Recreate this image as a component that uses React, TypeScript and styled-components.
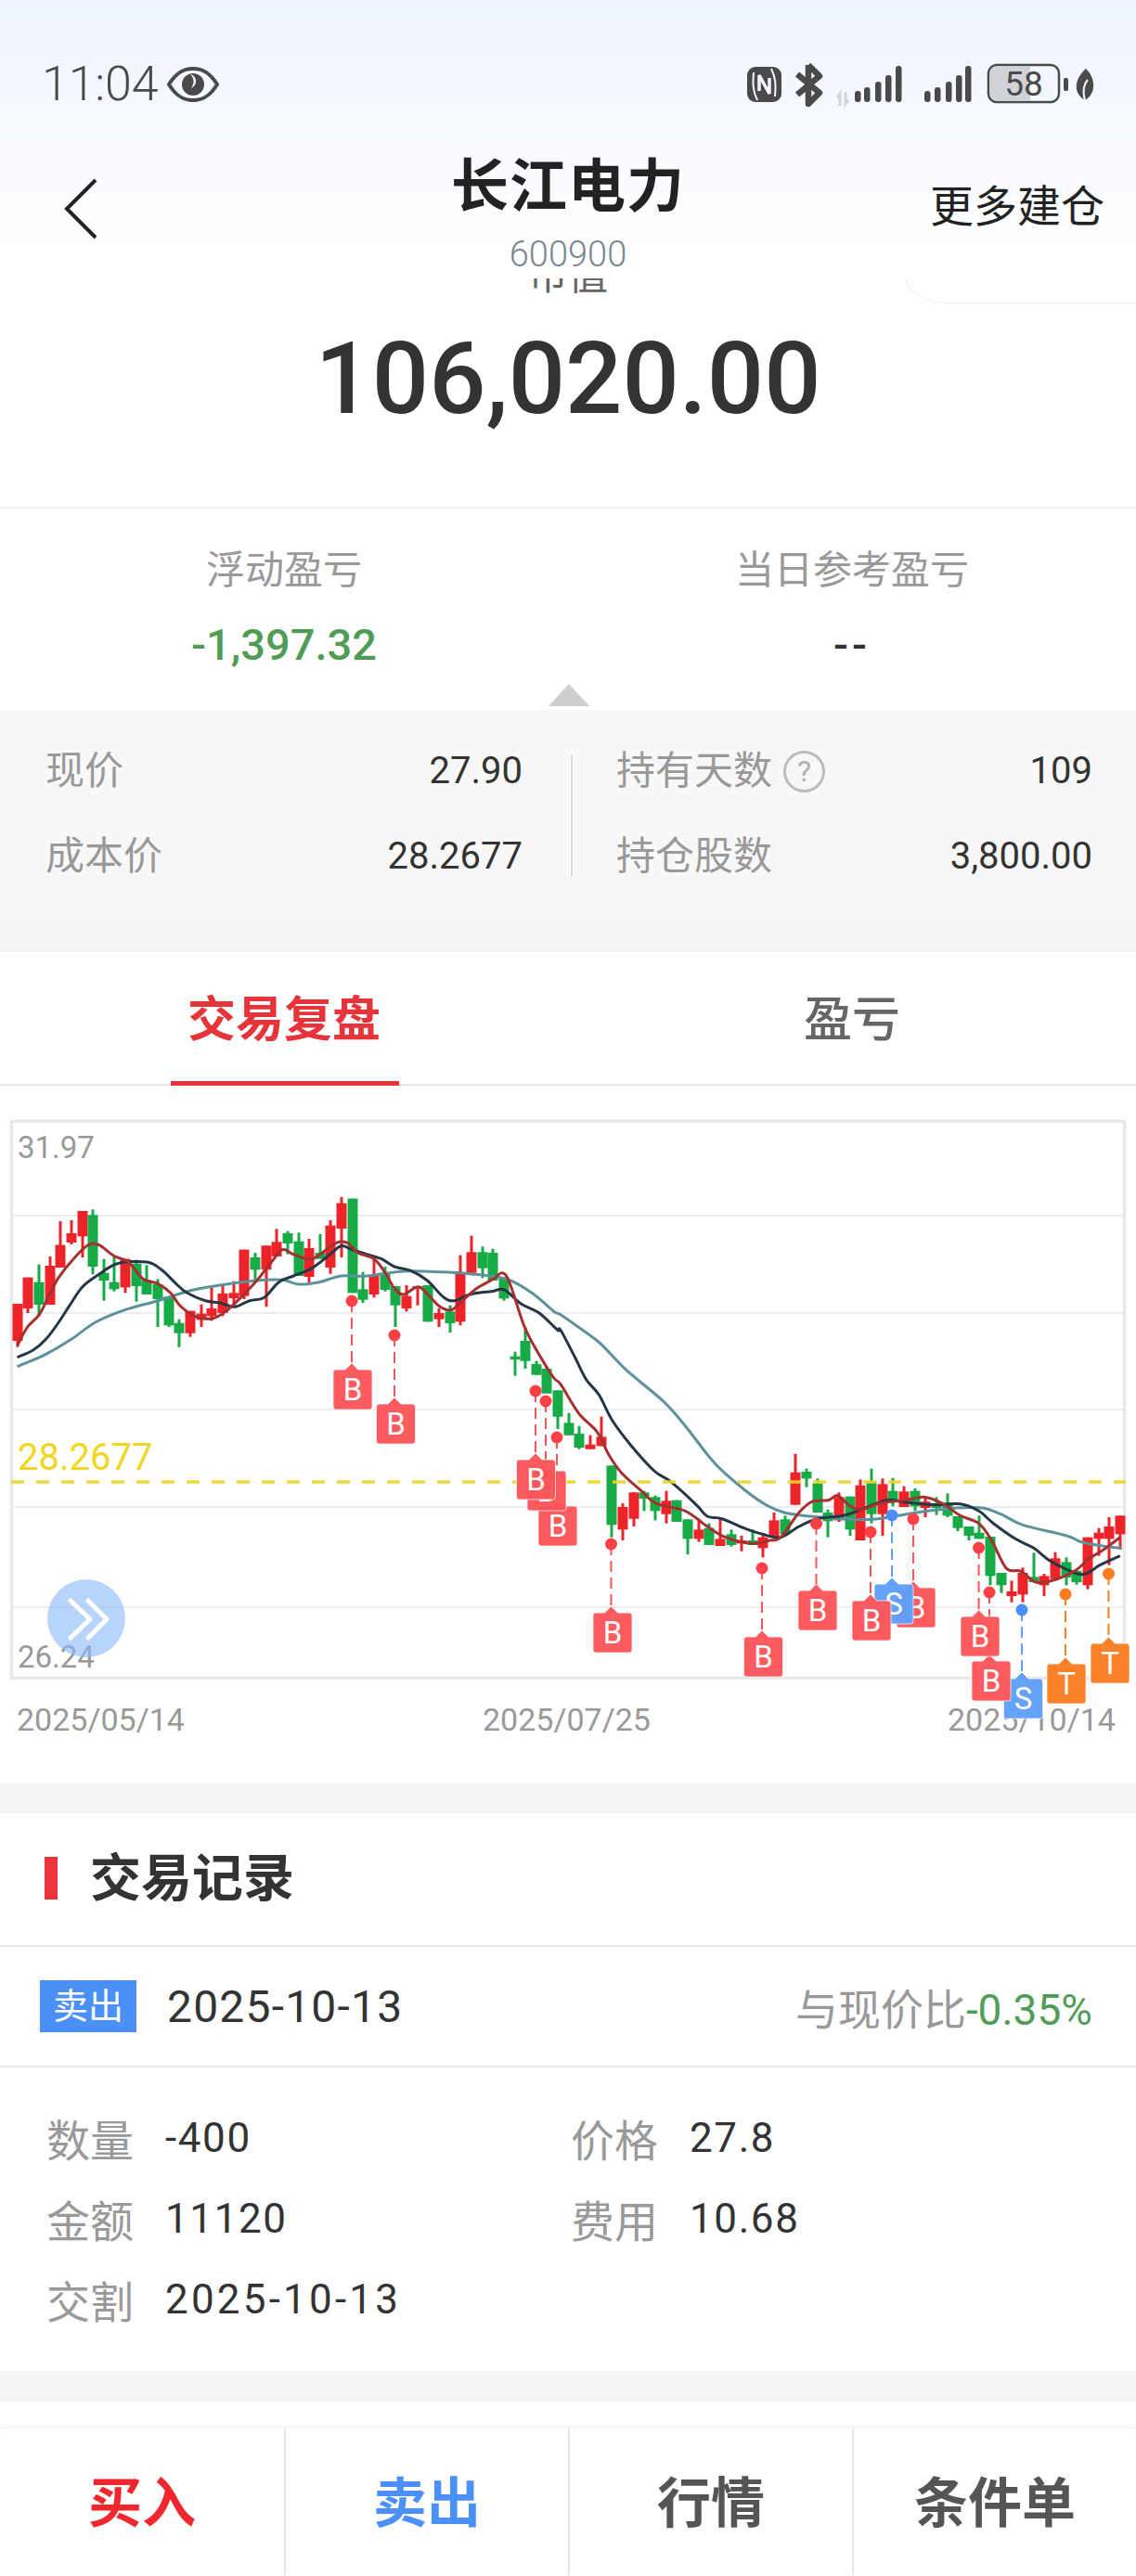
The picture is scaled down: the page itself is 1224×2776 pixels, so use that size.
import React from "react";
import styled, { createGlobalStyle } from "styled-components";

const Global = createGlobalStyle`
  html, body { margin: 0; padding: 0; background: #fff; }
  body { font-family: Roboto, "Noto Sans CJK SC", sans-serif; }
  * { box-sizing: border-box; }
`;

const Page = styled.div`
  position: relative; width: 1224px; height: 2776px; overflow: hidden;
  display: flex; flex-direction: column; background: #fff;
`;
const Header = styled.header`
  height: 300px; flex: none;
  background: linear-gradient(180deg, #eef4fd 0%, #f5f8fe 35%, #ffffff 92%);
`;
const StatusBar = styled.div`
  display: flex; justify-content: space-between; align-items: center;
  height: 50px; margin-top: 66px; padding: 0 44px 0 45px; color: #4a4a4a;
`;
const TimeBox = styled.div`display: flex; align-items: center; gap: 10px;`;
const Time = styled.span`font-size: 52px; line-height: 50px; letter-spacing: -0.2px; font-weight: 300;`;
const Nav = styled.nav`
  display: grid; grid-template-columns: 1fr auto 1fr; padding-top: 55px;
`;
const Back = styled.div`padding: 21px 0 0 68px;`;
const TitleBox = styled.div`display: flex; flex-direction: column; align-items: center;`;
const Title = styled.h1`
  margin: 0; font-size: 62px; line-height: 62px; font-weight: 700; color: #222; letter-spacing: 1px;
`;
const Code = styled.div`font-size: 38px; line-height: 40px; margin-top: 21px; color: #7b8691; font-weight: 300;`;
const More = styled.div`
  justify-self: end; padding: 27px 34px 0 0; font-size: 47px; line-height: 50px; color: #222;
`;
const MoreCorner = styled.div`
  position: absolute; top: 300px; right: 0; width: 248px; height: 27px; background: #fff;
  border-left: 1px solid #ececec; border-bottom: 1px solid #ececec;
  border-bottom-left-radius: 47px 27px;
`;
const ValueSection = styled.section`
  height: 248px; flex: none; overflow: hidden; border-bottom: 2px solid #eeeeee;
  display: flex; flex-direction: column; align-items: center;
`;
const ValueLabel = styled.div`font-size: 43px; line-height: 44px; margin-top: -25px; color: #666;`;
const ValueNumber = styled.div`
  font-size: 108px; line-height: 120px; margin-top: 29px; color: #333; font-weight: 500;
`;
const Pnl = styled.section`
  position: relative; height: 217px; flex: none; display: grid; grid-template-columns: 1fr 1fr;
`;
const PnlCell = styled.div`display: flex; flex-direction: column; align-items: center; padding-top: 42px;`;
const PnlLabel = styled.div`font-size: 42px; line-height: 50px; color: #999;`;
const PnlValue = styled.div<{ $c: string; $ls?: number }>`
  font-size: 47px; line-height: 56px; margin-top: 27px; font-weight: 500; color: ${p => p.$c};
  letter-spacing: ${p => p.$ls ?? 0}px;
`;
const Arrow = styled.div`
  position: absolute; left: 591px; bottom: 4px; width: 0; height: 0;
  border-left: 22px solid transparent; border-right: 22px solid transparent; border-bottom: 24px solid #cfcfcf;
`;
const Panel = styled.section`
  height: 228px; flex: none; background: #f8f8f8; display: flex; padding: 43px 47px 0 49px;
`;
const PanelCol = styled.div<{ $w: number }>`
  width: ${p => p.$w}px; display: flex; flex-direction: column; gap: 46px;
`;
const PanelRow = styled.div`display: flex; justify-content: space-between; align-items: center; height: 46px;`;
const PanelKey = styled.span`
  font-size: 42px; line-height: 46px; color: #999; display: flex; align-items: center; gap: 12px;
`;
const PanelVal = styled.span`font-size: 40px; line-height: 46px; color: #333;`;
const Help = styled.span`
  width: 45px; height: 45px; border-radius: 50%; border: 3px solid #bdbdbd; color: #b0b0b0;
  font-size: 32px; line-height: 39px; text-align: center; display: inline-block;
`;
const PanelDivider = styled.div`
  width: 2px; height: 130px; margin: 6px 47px 0 52px; background: #dddddd;
`;
const Gap = styled.div<{ $h: number }>`height: ${p => p.$h}px; flex: none; background: #f4f4f4;`;
const Tabs = styled.div`display: flex; height: 144px; flex: none; border-bottom: 2px solid #e8e8ea;`;
const Tab = styled.div<{ $active?: boolean }>`
  position: relative; flex: 1; display: flex; align-items: center; justify-content: center; padding-bottom: 6px;
  font-size: 52px; font-weight: ${p => (p.$active ? 700 : 500)}; color: ${p => (p.$active ? "#e6343a" : "#666")};
  &::after {
    content: ""; display: ${p => (p.$active ? "block" : "none")};
    position: absolute; left: 184px; width: 246px; height: 5px; bottom: -2px; background: #e6343a;
  }
`;
const ChartSvg = styled.svg`display: block; flex: none; position: relative; z-index: 1; overflow: visible;`;
const AxisText = styled.text`font-family: Roboto, sans-serif; font-size: 33px; fill: #999;`;
const DateText = styled.text`font-family: Roboto, sans-serif; font-size: 34px; fill: #999;`;
const CostText = styled.text`font-family: Roboto, sans-serif; font-size: 40px; fill: #f0d722;`;
const MarkText = styled.text`font-family: Roboto, sans-serif; font-size: 33px; fill: #fff; text-anchor: middle;`;
const SectionHead = styled.div`
  height: 144px; flex: none; display: flex; align-items: center; gap: 35px; padding: 0 0 3px 48px;
  border-bottom: 2px solid #eaeaea;
`;
const HeadBar = styled.i`display: block; width: 14px; height: 46px; background: #ee343b;`;
const HeadText = styled.h2`margin: 0; font-size: 55px; line-height: 60px; color: #333; font-weight: 700;`;
const Record = styled.div`
  height: 130px; flex: none; display: flex; align-items: center; padding: 0 47px 0 43px;
  border-bottom: 2px solid #eaeaea;
`;
const Badge = styled.span`
  width: 104px; height: 56px; background: #4a90f7; color: #fff; font-size: 38px; line-height: 56px; text-align: center;
`;
const RecDate = styled.span`font-size: 48px; margin-left: 33px; color: #333; letter-spacing: 1.2px;`;
const Compare = styled.span`margin-left: auto; font-size: 46px; color: #999;`;
const CompareVal = styled.span`font-size: 46px; color: #4f9d55;`;
const Details = styled.div`
  height: 327px; flex: none; padding: 32px 0 0 50px;
  display: grid; grid-template-columns: 565px 1fr; grid-auto-rows: 87px;
`;
const Detail = styled.div`display: flex; align-items: center; gap: 34px;`;
const DetailKey = styled.span`font-size: 47px; color: #999;`;
const DetailVal = styled.span<{ $ls?: number }>`
  font-size: 44px; color: #333; letter-spacing: ${p => p.$ls ?? 1.6}px;
`;
const Spacer = styled.div`height: 29px; flex: none;`;
const BottomBar = styled.div`
  height: 158px; flex: none; display: grid; grid-template-columns: repeat(4, 1fr); background: #fff;
  box-shadow: 0 -2px 5px rgba(0, 0, 0, 0.06); position: relative; z-index: 2;
`;
const BarBtn = styled.div<{ $c: string }>`
  display: flex; align-items: center; justify-content: center; padding-bottom: 6px;
  font-size: 58px; font-weight: 700; color: ${p => p.$c};
  & + & { border-left: 2px solid #e5e5e5; }
`;

const X2 = (X: number) => X / 2.53;
const X3 = (X: number) => 604 + X / 2.53;
const Y = (v: number) => 1180 + v / 3;

type C = [number, number, number, number, "r" | "g"];
const candles: C[] = [
  [675,675,795,815,"r"],[590,590,690,705,"r"],[548,605,678,715,"g"],[522,552,678,678,"r"],[408,485,558,558,"r"],
  [405,447,477,483,"r"],[375,375,457,525,"r"],[370,388,555,580,"g"],[530,575,600,665,"g"],[520,605,628,635,"g"],
  [530,530,622,640,"r"],[533,545,618,668,"g"],[550,598,645,645,"g"],[595,612,660,750,"g"],[652,652,745,750,"g"],
  [725,737,770,815,"g"],[698,698,770,782,"r"],[677,707,727,750,"r"],[615,690,715,730,"r"],[615,642,705,715,"r"],
  [602,640,657,680,"r"],[500,500,650,660,"r"],[510,525,565,600,"g"],[487,487,565,685,"r"],[433,475,522,522,"r"],
  [440,447,480,515,"g"],[445,473,585,585,"g"],[465,495,588,615,"r"],[450,510,530,530,"g"],[405,422,558,578,"r"],
  [330,350,432,525,"r"],[335,335,640,640,"g"],[572,628,662,672,"g"],[530,585,645,655,"r"],[555,575,630,635,"g"],
  [618,618,680,750,"g"],[615,650,690,700,"r"],[618,618,626,680,"r"],[615,615,733,733,"g"],[690,705,725,750,"r"],
  [680,700,738,768,"g"],[518,575,733,745,"r"],[455,508,575,575,"r"],[490,508,560,592,"g"],[497,510,600,600,"g"],
  [590,590,658,665,"g"],[830,845,855,908,"g"],[750,795,860,885,"g"],[860,870,905,905,"g"],[880,885,965,965,"g"],
  [955,955,1040,1080,"g"],[1028,1060,1100,1100,"g"],[1070,1095,1140,1145,"g"],[1100,1130,1145,1145,"r"],[1040,1105,1135,1135,"r"],
  [1198,1198,1390,1430,"g"],[1320,1332,1405,1440,"r"],[1285,1285,1370,1395,"r"],[1280,1285,1305,1345,"g"],[1295,1300,1345,1375,"g"],
  [1280,1312,1355,1385,"r"],[1310,1310,1380,1380,"g"],[1372,1372,1435,1485,"g"],[1370,1405,1435,1445,"r"],[1385,1400,1455,1455,"g"],
  [1370,1435,1458,1458,"r"],[1405,1420,1455,1460,"g"],[1425,1440,1450,1475,"r"],[1405,1440,1455,1455,"g"],[1425,1430,1465,1495,"r"],
  [1350,1375,1430,1430,"r"],[1360,1372,1420,1420,"g"],[1160,1220,1325,1325,"r"],[1208,1218,1240,1268,"g"],[1240,1255,1350,1350,"g"],
  [1340,1350,1378,1430,"g"],[1285,1300,1375,1380,"r"],[1298,1298,1405,1425,"g"],[1243,1262,1440,1440,"r"],[1208,1250,1355,1385,"g"],
  [1240,1258,1355,1425,"r"],[1238,1280,1315,1330,"g"],[1265,1282,1332,1332,"r"],[1272,1280,1330,1345,"g"],[1300,1315,1335,1365,"r"],
  [1300,1320,1335,1358,"g"],[1288,1318,1360,1365,"g"],[1362,1362,1400,1410,"g"],[1395,1395,1425,1440,"g"],[1360,1415,1435,1435,"g"],
  [1428,1428,1555,1585,"g"],[1545,1545,1585,1610,"g"],[1570,1605,1620,1640,"r"],[1528,1545,1615,1640,"r"],[1480,1558,1575,1575,"g"],
  [1548,1555,1585,1620,"r"],[1478,1498,1565,1570,"r"],[1495,1510,1560,1585,"g"],[1538,1538,1575,1583,"g"],[1430,1430,1585,1598,"r"],
  [1400,1415,1435,1490,"r"],[1365,1395,1435,1520,"r"],[1360,1360,1420,1470,"r"],
];

type P = [number, number];
const toPts = (a: number[][], fx: (n: number) => number): P[] => a.map(([x, y]) => [fx(x), Y(y)]);

const smooth = (pts: P[]) => {
  let d = `M${pts[0][0].toFixed(1)} ${pts[0][1].toFixed(1)}`;
  for (let i = 0; i < pts.length - 1; i++) {
    const p0 = pts[Math.max(i - 1, 0)], p1 = pts[i], p2 = pts[i + 1], p3 = pts[Math.min(i + 2, pts.length - 1)];
    const c1x = p1[0] + (p2[0] - p0[0]) / 6, c1y = p1[1] + (p2[1] - p0[1]) / 6;
    const c2x = p2[0] - (p3[0] - p1[0]) / 6, c2y = p2[1] - (p3[1] - p1[1]) / 6;
    d += `C${c1x.toFixed(1)} ${c1y.toFixed(1)} ${c2x.toFixed(1)} ${c2y.toFixed(1)} ${p2[0].toFixed(1)} ${p2[1].toFixed(1)}`;
  }
  return d;
};

const ma5 = [
  ...toPts([[47,810],[75,750],[107,710],[133,650],[160,590],[200,530],[240,485],[270,485],[310,520],[350,540],[390,595],[430,610],[465,640],[490,680],[530,715],[580,722],[620,695],[660,650],[700,600],[740,540],[770,500],[800,515],[850,530],[900,490],[925,475],[950,480],[975,510],[1020,530],[1050,575],[1075,625],[1100,645],[1140,620],[1170,650],[1200,685],[1230,695],[1260,665],[1300,625],[1345,595],[1370,575],[1390,610],[1430,750],[1470,840],[1510,915]], X2),
  ...toPts([[0,935],[50,1030],[100,1090],[130,1160],[165,1220],[220,1280],[260,1320],[340,1345],[400,1395],[450,1430],[520,1450],[570,1440],[600,1430],[650,1350],[685,1315],[730,1310],[755,1295],[790,1330],[820,1340],[870,1320],[940,1310],[990,1300],[1040,1320],[1090,1360],[1140,1385],[1175,1440],[1215,1530],[1255,1540],[1295,1575],[1340,1570],[1400,1540],[1440,1500],[1480,1470],[1525,1430]], X3),
];
const ma10 = [
  ...toPts([[47,848],[90,825],[125,790],[160,735],[190,680],[225,620],[270,580],[320,545],[400,540],[440,565],[480,610],[510,640],[560,665],[600,672],[640,685],[680,665],[720,655],[760,605],[800,585],[850,560],[900,515],[930,488],[960,500],[1000,515],[1040,530],[1075,555],[1120,568],[1165,600],[1210,655],[1240,665],[1280,645],[1340,635],[1375,630],[1420,675],[1470,705],[1520,760]], X2),
  ...toPts([[0,760],[40,850],[70,920],[105,970],[140,1050],[190,1130],[255,1215],[300,1250],[370,1325],[400,1362],[440,1370],[500,1400],[550,1420],[600,1430],[650,1395],[700,1370],[770,1360],[830,1335],[890,1310],[950,1318],[1020,1325],[1090,1322],[1140,1345],[1180,1385],[1240,1435],[1290,1465],[1340,1510],[1420,1550],[1470,1520],[1525,1490]], X3),
];
const ma20 = [
  ...toPts([[47,878],[125,838],[200,785],[260,735],[340,695],[430,665],[520,632],[600,615],[700,600],[770,598],[815,612],[870,605],[930,585],[1000,585],[1100,570],[1200,572],[1280,578],[1380,595],[1450,640],[1510,700]], X2),
  ...toPts([[0,710],[60,760],[110,805],[180,890],[280,990],[340,1070],[420,1190],[500,1275],[560,1325],[610,1350],[680,1362],[770,1370],[850,1372],[930,1358],[1000,1345],[1080,1335],[1150,1335],[1200,1355],[1260,1390],[1380,1425],[1420,1445],[1490,1460],[1530,1465]], X3),
];

const RED = "#fc5558", BLUE = "#5f9ffb", ORANGE = "#fb7d1f";
type M = { x: number; y: number; bx: number; by: number; t: string; c: string; dot?: string };
const markers: M[] = [
  { x: 379, y: 1402, bx: 359, by: 1476, t: "B", c: RED, dot: "#fb4146" },
  { x: 425, y: 1439, bx: 405.5, by: 1513, t: "B", c: RED, dot: "#fb4146" },
  { x: 600, y: 1549, bx: 580, by: 1623, t: "B", c: RED, dot: "#fb4146" },
  { x: 588, y: 1510, bx: 568, by: 1585, t: "B", c: RED, dot: "#fb4146" },
  { x: 577, y: 1499, bx: 556.5, by: 1573, t: "B", c: RED, dot: "#fb4146" },
  { x: 658.5, y: 1664, bx: 639, by: 1738, t: "B", c: RED, dot: "#fb4146" },
  { x: 821, y: 1690, bx: 801.5, by: 1764, t: "B", c: RED, dot: "#fb4146" },
  { x: 879.5, y: 1642, bx: 860, by: 1714, t: "B", c: RED, dot: "#fb4146" },
  { x: 984, y: 1637, bx: 966, by: 1711, t: "B", c: RED, dot: "#fb4146" },
  { x: 961, y: 1633, bx: 942, by: 1707, t: "S", c: BLUE, dot: "#4a8ffb" },
  { x: 938, y: 1651, bx: 918, by: 1725, t: "B", c: RED, dot: "#fb4146" },
  { x: 1101, y: 1735, bx: 1081.5, by: 1809, t: "S", c: BLUE, dot: "#4a8ffb" },
  { x: 1066, y: 1716, bx: 1047, by: 1790, t: "B", c: RED, dot: "#fb4146" },
  { x: 1054.6, y: 1668, bx: 1035, by: 1742, t: "B", c: RED, dot: "#fb4146" },
  { x: 1148, y: 1718, bx: 1128, by: 1793, t: "T", c: ORANGE, dot: "#fb7d1f" },
  { x: 1194.5, y: 1696, bx: 1175, by: 1771, t: "T", c: ORANGE, dot: "#fb7d1f" },
];

const Marker = ({ x, y, bx, by, t, c, dot }: M) => (
  <g>
    <line x1={x} y1={y} x2={x} y2={by} stroke={c} strokeWidth={2} strokeDasharray="12 6" />
    <circle cx={x} cy={y} r={6.5} fill={dot} />
    <path
      d={`M${bx + 3} ${by} H${x - 7} L${x} ${by - 7} L${x + 7} ${by} H${bx + 39} Q${bx + 42} ${by} ${bx + 42} ${by + 3} V${by + 40} Q${bx + 42} ${by + 43} ${bx + 39} ${by + 43} H${bx + 3} Q${bx} ${by + 43} ${bx} ${by + 40} V${by + 3} Q${bx} ${by} ${bx + 3} ${by}Z`}
      fill={c} fillOpacity={0.96} stroke="#fff" strokeOpacity={0.7} strokeWidth={1}
    />
    <MarkText x={bx + 21} y={by + 33}>{t}</MarkText>
  </g>
);

const Chart = () => (
  <ChartSvg width={1224} height={752} viewBox="0 1170 1224 752">
    <rect x={12.5} y={1208.5} width={1199} height={600} fill="#fff" stroke="#e8e8ec" strokeWidth={3.5} />
    {[1310, 1415, 1519, 1624, 1732].map(g => (
      <line key={g} x1={14} x2={1210} y1={g} y2={g} stroke="#ebebf1" strokeWidth={2} />
    ))}
    {candles.map(([wt, bt, bb, wb, c], i) => {
      const x = Math.round(18.6 + 11.65 * i);
      const col = c === "r" ? "#ec2328" : "#16ab47";
      return (
        <g key={i} fill={col}>
          <rect x={x - 1.5} y={Y(wt)} width={3} height={(wb - wt) / 3} />
          <rect x={x - 5.5} y={Y(bt)} width={11} height={Math.max((bb - bt) / 3, 2)} />
        </g>
      );
    })}
    <path d={smooth(ma20)} fill="none" stroke="#5d929c" strokeWidth={3} strokeLinejoin="round" />
    <path d={smooth(ma10)} fill="none" stroke="#253746" strokeWidth={3} strokeLinejoin="round" />
    <path d={smooth(ma5)} fill="none" stroke="#a5302f" strokeWidth={3} strokeLinejoin="round" />
    <line x1={12} x2={1213} y1={1597} y2={1597} stroke="#edd62a" strokeOpacity={0.92} strokeWidth={3.5} strokeDasharray="14 13" />
    <AxisText x={19} y={1248}>31.97</AxisText>
    <CostText x={19} y={1584}>28.2677</CostText>
    <AxisText x={19} y={1797}>26.24</AxisText>
    <DateText x={18} y={1865}>2025/05/14</DateText>
    <DateText x={520} y={1865}>2025/07/25</DateText>
    <DateText x={1021} y={1865}>2025/10/14</DateText>
    <circle cx={93} cy={1744} r={42} fill="#8ab8f8" fillOpacity={0.6} />
    <path d="M76 1725 L97 1745 L76 1765 M95 1725 L115 1745 L95 1765" fill="none" stroke="#fff" strokeWidth={5} strokeLinecap="round" strokeLinejoin="round" />
    {markers.map((m, i) => <Marker key={i} {...m} />)}
  </ChartSvg>
);

const EyeIcon = () => (
  <svg width="56" height="38" viewBox="0 0 56 38">
    <path d="M2 19 C10 6 18 2 28 2 C38 2 46 6 54 19 C46 32 38 36 28 36 C18 36 10 32 2 19Z" fill="none" stroke="#4a4a4a" strokeWidth={4} />
    <circle cx="28" cy="19" r="12" fill="#4a4a4a" />
    <path d="M25 8 C33 10 33 20 26 23 C30 17 29 12 25 8Z" fill="#f2f6fe" />
  </svg>
);

const BatteryText = styled.text`font-family: Roboto, sans-serif; font-size: 37px; fill: #4a4a4a; text-anchor: middle;`;

const StatusIcons = () => {
  const hs = [12, 16, 22, 29, 39];
  return (
    <svg width="380" height="50" viewBox="800 66 380 50">
      <rect x={805} y={72} width={37} height={38} rx={9} fill="#4a4a4a" />
      <path d="M812 78 C811 90 811 98 816 108" stroke="#f2f6fe" strokeWidth={2} fill="none" />
      <path d="M835 104 C836 92 836 84 831 74" stroke="#f2f6fe" strokeWidth={2} fill="none" />
      <path d="M818 98 V81 L829 101 V84" stroke="#f2f6fe" strokeWidth={3.5} fill="none" />
      <path d="M871 70 L871 112 L883 100 L859 80 M871 70 L883 82 L859 102" fill="none" stroke="#4a4a4a" strokeWidth={6.5} strokeLinejoin="round" />
      <path d="M905 114 V101 L902 105 M911 99 V112 L914 108" fill="none" stroke="#d2d4d8" strokeWidth={3} />
      {[924, 934, 946, 957, 968].map((x, i) => (
        <rect key={x} x={x - 3} y={110 - hs[i]} width={6.5} height={hs[i]} rx={3} fill="#4a4a4a" />
      ))}
      {[999, 1010, 1022, 1033, 1043].map((x, i) => (
        <rect key={x} x={x - 3} y={110 - hs[i]} width={6.5} height={hs[i]} rx={3} fill="#4a4a4a" />
      ))}
      <rect x={1065} y={70} width={76} height={40} rx={9} fill="#f4f7fd" stroke="#4a4a4a" strokeWidth={2.5} />
      <path d="M1067 79 Q1067 72 1074 72 H1110 V108 H1074 Q1067 108 1067 101Z" fill="#d0d3d8" />
      <BatteryText x={1103} y={103}>58</BatteryText>
      <rect x={1146} y={84} width={5} height={14} rx={2} fill="#4a4a4a" />
      <path d="M1170 74 C1182 86 1180 102 1169 108 C1156 100 1157 86 1170 74Z" fill="#4a4a4a" />
      <path d="M1169 108 C1166 98 1168 90 1172 86" fill="none" stroke="#f2f6fe" strokeWidth={2} />
    </svg>
  );
};

export default function App() {
  return (
    <Page>
      <Global />
      <Header>
        <StatusBar>
          <TimeBox><Time>11:04</Time><EyeIcon /></TimeBox>
          <StatusIcons />
        </StatusBar>
        <Nav>
          <Back>
            <svg width="38" height="66" viewBox="0 0 38 66">
              <path d="M35 2 L4 33 L35 64" fill="none" stroke="#222" strokeWidth={4} />
            </svg>
          </Back>
          <TitleBox>
            <Title>长江电力</Title>
            <Code>600900</Code>
          </TitleBox>
          <More>更多建仓</More>
        </Nav>
      </Header>
      <MoreCorner />
      <ValueSection>
        <ValueLabel>市值</ValueLabel>
        <ValueNumber>106,020.00</ValueNumber>
      </ValueSection>
      <Pnl>
        <PnlCell><PnlLabel>浮动盈亏</PnlLabel><PnlValue $c="#4f9d55">-1,397.32</PnlValue></PnlCell>
        <PnlCell><PnlLabel>当日参考盈亏</PnlLabel><PnlValue $c="#333" $ls={4}>--</PnlValue></PnlCell>
        <Arrow />
      </Pnl>
      <Panel>
        <PanelCol $w={514}>
          <PanelRow><PanelKey>现价</PanelKey><PanelVal>27.90</PanelVal></PanelRow>
          <PanelRow><PanelKey>成本价</PanelKey><PanelVal>28.2677</PanelVal></PanelRow>
        </PanelCol>
        <PanelDivider />
        <PanelCol $w={513}>
          <PanelRow><PanelKey>持有天数<Help>?</Help></PanelKey><PanelVal>109</PanelVal></PanelRow>
          <PanelRow><PanelKey>持仓股数</PanelKey><PanelVal>3,800.00</PanelVal></PanelRow>
        </PanelCol>
      </Panel>
      <Gap $h={33} />
      <Tabs>
        <Tab $active>交易复盘</Tab>
        <Tab>盈亏</Tab>
      </Tabs>
      <Chart />
      <Gap $h={32} />
      <SectionHead><HeadBar /><HeadText>交易记录</HeadText></SectionHead>
      <Record>
        <Badge>卖出</Badge>
        <RecDate>2025-10-13</RecDate>
        <Compare>与现价比<CompareVal>-0.35%</CompareVal></Compare>
      </Record>
      <Details>
        <Detail><DetailKey>数量</DetailKey><DetailVal>-400</DetailVal></Detail>
        <Detail><DetailKey>价格</DetailKey><DetailVal>27.8</DetailVal></Detail>
        <Detail><DetailKey>金额</DetailKey><DetailVal>11120</DetailVal></Detail>
        <Detail><DetailKey>费用</DetailKey><DetailVal>10.68</DetailVal></Detail>
        <Detail><DetailKey>交割</DetailKey><DetailVal $ls={3.2}>2025-10-13</DetailVal></Detail>
      </Details>
      <Gap $h={33} />
      <Spacer />
      <BottomBar>
        <BarBtn $c="#f0282d">买入</BarBtn>
        <BarBtn $c="#4a90f7">卖出</BarBtn>
        <BarBtn $c="#555">行情</BarBtn>
        <BarBtn $c="#555">条件单</BarBtn>
      </BottomBar>
    </Page>
  );
}
